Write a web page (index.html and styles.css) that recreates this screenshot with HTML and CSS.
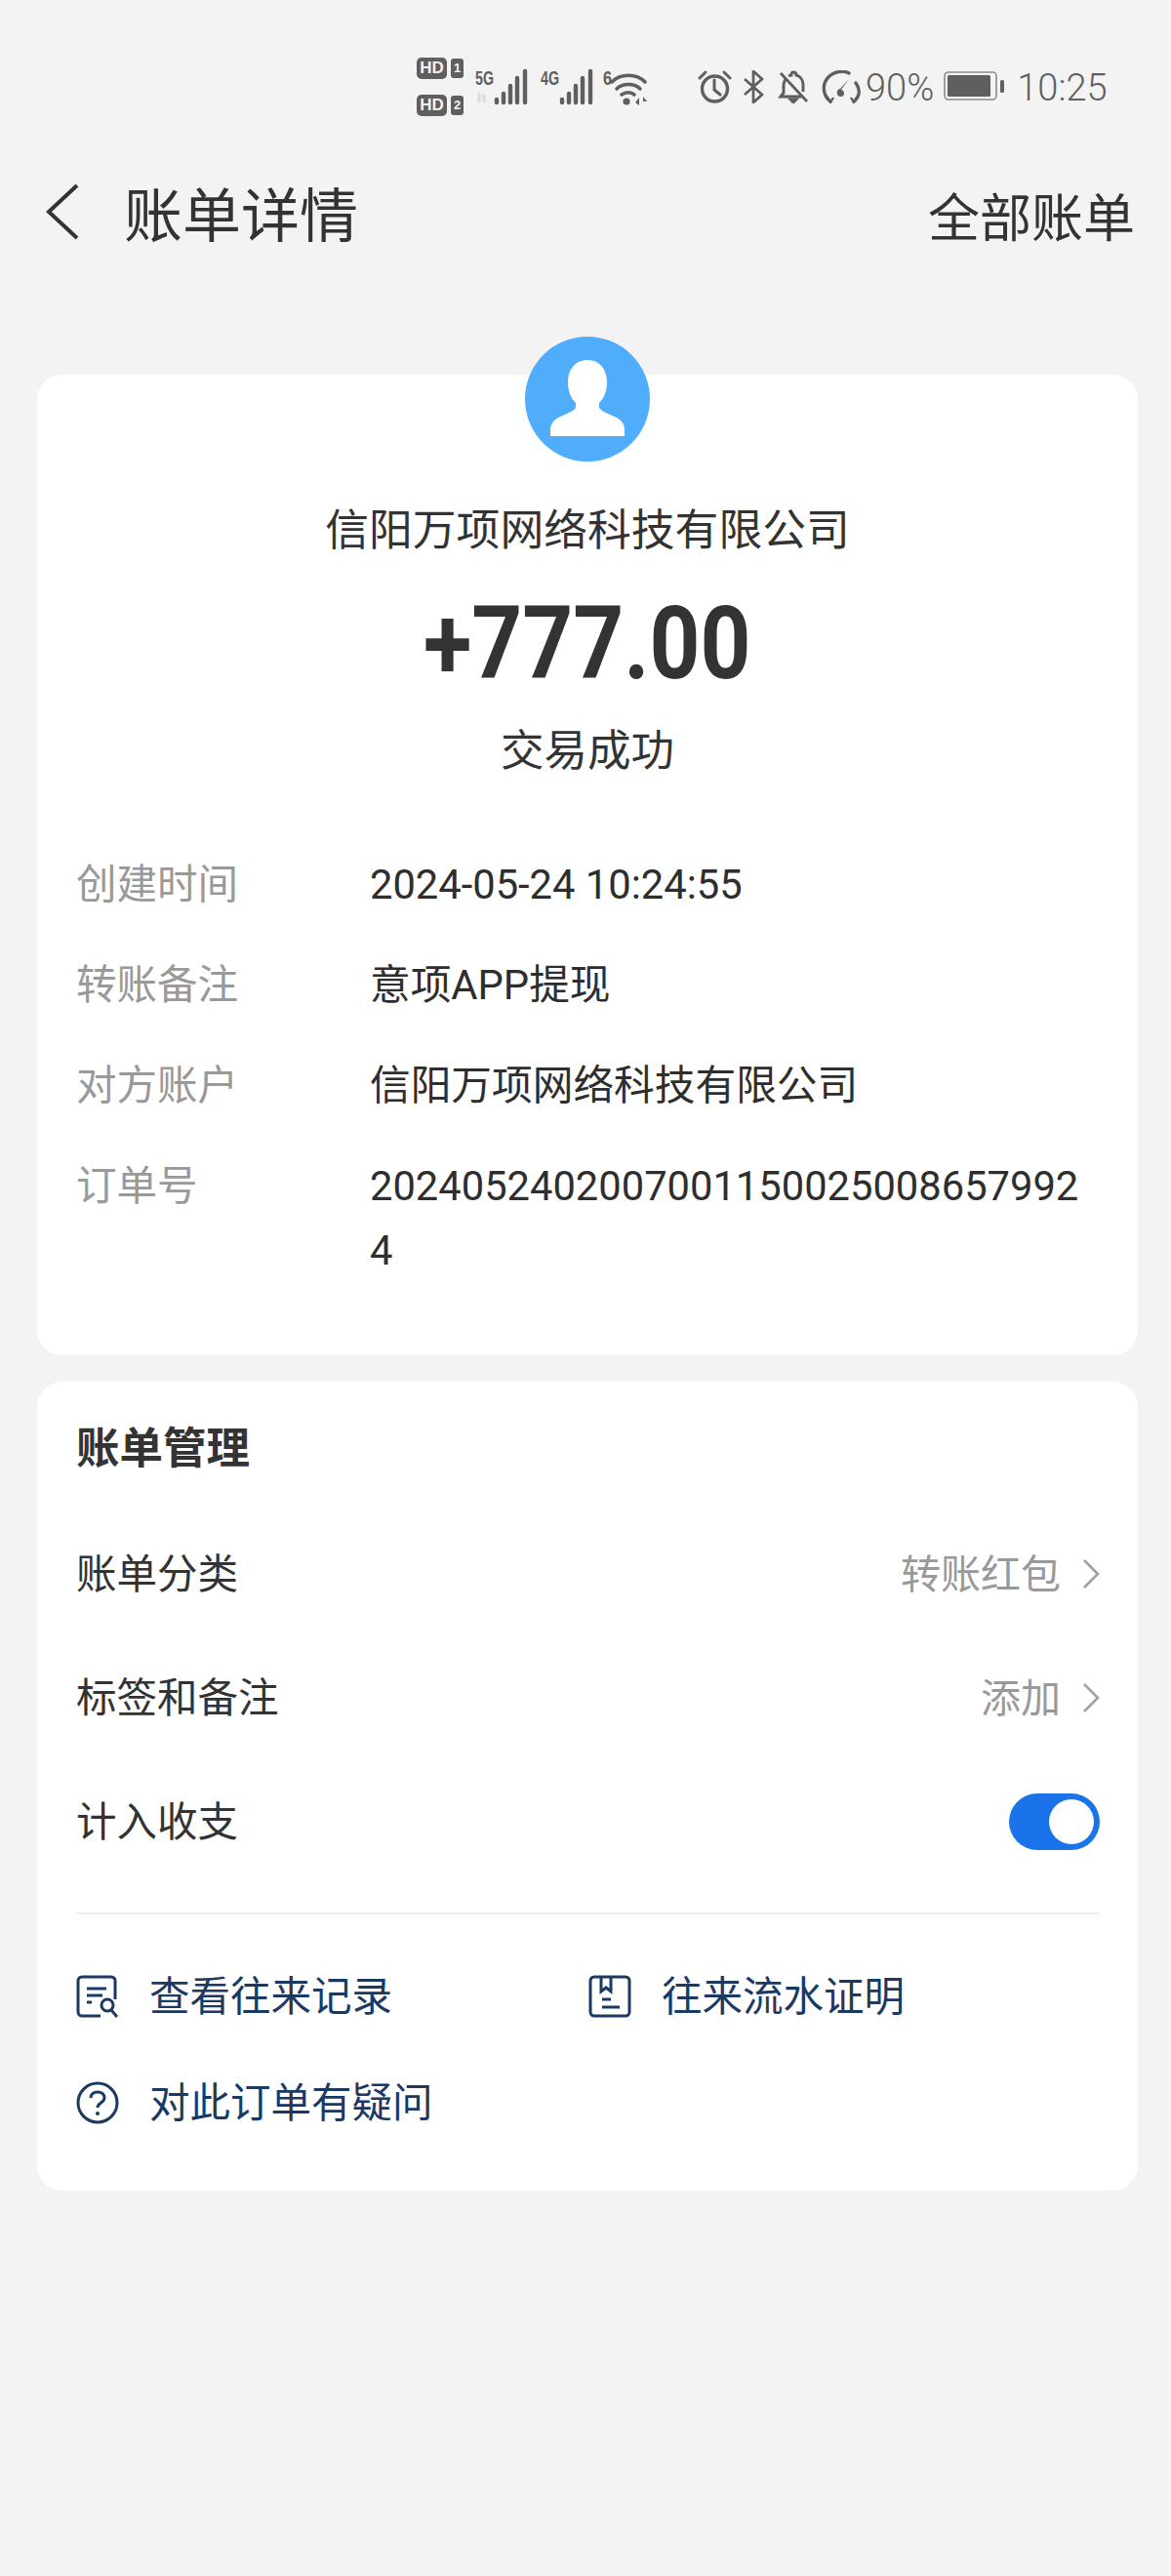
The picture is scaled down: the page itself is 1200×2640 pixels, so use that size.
FILE: index.html
```html
<!DOCTYPE html>
<html lang="zh-CN">
<head>
<meta charset="utf-8">
<title>账单详情</title>
<link rel="stylesheet" href="styles.css">
</head>
<body>
<div class="status">
  <div class="hd-group">
    <div class="hd-row"><span class="hd">HD</span><span class="sim">1</span></div>
    <div class="hd-row"><span class="hd">HD</span><span class="sim">2</span></div>
  </div>
  <svg class="ic-net" width="56" height="44" viewBox="0 -8 56 44">
    <text x="0" y="15" class="net-t" textLength="19" lengthAdjust="spacingAndGlyphs">5G</text>
    <path d="M4 23v10M9 25v8" stroke="#dcdcdc" stroke-width="3" fill="none"/>
    <path d="M22 30v3M29 24v9M36 16v17M43 8v25M51 1v32" stroke="#5f5f5f" stroke-width="4.400" stroke-linecap="round" fill="none"/>
  </svg>
  <svg class="ic-net2" width="56" height="44" viewBox="0 -8 56 44">
    <text x="0" y="15" class="net-t" textLength="19" lengthAdjust="spacingAndGlyphs">4G</text>
    <path d="M22 30v3M29 24v9M36 16v17M43 8v25M51 1v32" stroke="#5f5f5f" stroke-width="4.400" stroke-linecap="round" fill="none"/>
  </svg>
  <svg class="ic-wifi" width="46" height="44" viewBox="0 -8 46 44">
    <text x="0" y="15" class="net-t" textLength="9" lengthAdjust="spacingAndGlyphs">6</text>
    <path d="M9 12C18 3 34 3 43 12M14 19C20 13 32 13 38 19M19 25C23 22 29 22 32 25" stroke="#5f5f5f" stroke-width="3.600" fill="none" stroke-linecap="round"/>
    <circle cx="24" cy="32" r="3.600" fill="#5f5f5f"/>
    <path d="M33 33l4-5v8zM41 27l4 5h-4z" fill="#5f5f5f"/>
  </svg>
  <svg class="ic-alarm" width="35" height="34" viewBox="0 0 35 34">
    <circle cx="17.500" cy="19" r="13" stroke="#5f5f5f" stroke-width="3.400" fill="none"/>
    <path d="M17 10v10l6 5M2 8l6-6M33 8l-6-6" stroke="#5f5f5f" stroke-width="3" fill="none" stroke-linecap="round"/>
  </svg>
  <svg class="ic-bt" width="22" height="34" viewBox="0 0 22 34">
    <path d="M2 9l18 16-9 8V1l9 8L2 25" stroke="#5f5f5f" stroke-width="2.800" fill="none" stroke-linejoin="round"/>
  </svg>
  <svg class="ic-bell" width="32" height="34" viewBox="0 0 32 34">
    <path d="M8 9c-1 2-2 4-2 6v8l-3 4h21M26 22v-7c0-5-3-9-7-10 0-2-1-3-3-3s-2 1-2 3c-1 0-2 .500-3 1" stroke="#5f5f5f" stroke-width="3" fill="none"/>
    <path d="M13 30h6l-3 3zM3 3l27 29" stroke="#5f5f5f" stroke-width="2.800" fill="#5f5f5f"/>
  </svg>
  <svg class="ic-speed" width="42" height="34" viewBox="0 0 42 34">
    <path d="M10 32C2 26 1 14 8 7 14 1 23 0 29 3M36 13c5 7 4 14-2 19" stroke="#5f5f5f" stroke-width="3.400" fill="none" stroke-linecap="round"/>
    <path d="M29 9L21 20a3.500 3.500 0 1 1-4 4 3.500 3.500 0 0 1 3-5z" fill="#5f5f5f"/>
    <path d="M6 26l4 7 3-5M31 28l3 5 4-7" stroke="#5f5f5f" stroke-width="2.400" fill="none"/>
  </svg>
  <span class="pct">90%</span>
  <svg class="ic-batt" width="63" height="30" viewBox="0 0 63 30">
    <rect x="1" y="1" width="53" height="28" rx="4" fill="none" stroke="#8a8a8a" stroke-width="1.600"/>
    <rect x="4" y="4" width="44" height="22" rx="1.500" fill="#5f5f5f"/>
    <rect x="58" y="9" width="4" height="13" rx="1.500" fill="#5f5f5f"/>
  </svg>
  <span class="clock">10:25</span>
</div>

<header class="topbar">
  <div class="top-left">
    <svg class="back" width="36" height="58" viewBox="0 0 36 58">
      <path d="M33 2L4 29l29 27" stroke="#333" stroke-width="4" fill="none"/>
    </svg>
    <h1 class="top-title">账单详情</h1>
  </div>
  <span class="top-link">全部账单</span>
</header>

<main class="cards">
  <section class="card card-main">
    <div class="avatar">
      <svg width="76" height="78" viewBox="0 0 76 78">
        <path d="M38 0c-13 0-20 10-20 23 0 9 3 16 8 21v4c0 4-10 7-18 11C3 62 0 66 0 71v7h76v-7c0-5-3-9-8-12-8-4-18-7-18-11v-4c5-5 8-12 8-21C58 10 51 0 38 0z" fill="#fff"/>
      </svg>
    </div>
    <div class="company">信阳万项网络科技有限公司</div>
    <div class="amount">+777.00</div>
    <div class="state">交易成功</div>
    <dl class="details">
      <div class="d-row"><dt>创建时间</dt><dd>2024-05-24 10:24:55</dd></div>
      <div class="d-row"><dt>转账备注</dt><dd>意项APP提现</dd></div>
      <div class="d-row"><dt>对方账户</dt><dd>信阳万项网络科技有限公司</dd></div>
      <div class="d-row"><dt>订单号</dt><dd>20240524020070011500250086579924</dd></div>
    </dl>
  </section>

  <section class="card card-manage">
    <h2 class="manage-title">账单管理</h2>
    <div class="m-row">
      <span class="m-text">账单分类</span>
      <span class="m-val"><span class="m-text">转账红包</span><svg class="chev" width="18" height="30" viewBox="0 0 18 30"><path d="M2 1l14 14L2 29" stroke="#a0a0a0" stroke-width="2.600" fill="none"/></svg></span>
    </div>
    <div class="m-row">
      <span class="m-text">标签和备注</span>
      <span class="m-val"><span class="m-text">添加</span><svg class="chev" width="18" height="30" viewBox="0 0 18 30"><path d="M2 1l14 14L2 29" stroke="#a0a0a0" stroke-width="2.600" fill="none"/></svg></span>
    </div>
    <div class="m-row">
      <span class="m-text">计入收支</span>
      <span class="toggle"><span class="knob"></span></span>
    </div>
    <div class="divider"></div>
    <div class="links">
      <div class="link">
        <svg width="44" height="44" viewBox="0 0 44 44">
          <path d="M25 42H6a4 4 0 0 1-4-4V6a4 4 0 0 1 4-4h30a4 4 0 0 1 4 4v19" stroke="#1b3a63" stroke-width="3" fill="none"/>
          <path d="M11 14h20M11 21h16M11 28h5" stroke="#1b3a63" stroke-width="3" fill="none"/>
          <circle cx="32" cy="31" r="6" stroke="#1b3a63" stroke-width="3" fill="none"/>
          <path d="M36 36l6 7" stroke="#1b3a63" stroke-width="3" fill="none"/>
        </svg>
        <span class="m-text">查看往来记录</span>
      </div>
      <div class="link">
        <svg width="44" height="44" viewBox="0 0 44 44">
          <rect x="2" y="2" width="40" height="40" rx="4" stroke="#1b3a63" stroke-width="3" fill="none"/>
          <path d="M13 3v14l5-4 5 4V3M14 25h9M14 33h18" stroke="#1b3a63" stroke-width="3" fill="none"/>
        </svg>
        <span class="m-text">往来流水证明</span>
      </div>
      <div class="link">
        <svg width="44" height="44" viewBox="0 0 44 44">
          <circle cx="22" cy="22" r="20" stroke="#1b3a63" stroke-width="3" fill="none"/>
          <path d="M15 17c0-4 3-6 7-6s7 2 7 6c0 5-7 5-7 10" stroke="#1b3a63" stroke-width="3" fill="none"/>
          <circle cx="22" cy="33" r="2" fill="#1b3a63"/>
        </svg>
        <span class="m-text">对此订单有疑问</span>
      </div>
    </div>
  </section>
</main>
</body>
</html>
```

FILE: styles.css
```css
* { box-sizing: border-box; }
html, body { margin: 0; padding: 0; }
body {
  width: 1200px;
  height: 2640px;
  overflow: hidden;
  background: #f3f3f3;
  color: #333;
  font-family: "Noto Sans CJK SC", "Noto Sans", Roboto, sans-serif;
}

/* status bar */
.status {
  height: 130px;
  padding: 58px 0 0 427px;
  display: flex;
  align-items: flex-start;
  color: #5f5f5f;
  font-family: Roboto, sans-serif;
}
.hd-group { display: flex; flex-direction: column; gap: 16px; width: 60px; flex: none; margin-top: 1px; }
.hd-row { display: flex; gap: 4px; align-items: center; }
.hd {
  width: 31px; height: 22px; border-radius: 5px;
  background: #5f5f5f; color: #f3f3f3;
  font: 700 17px/22px "Liberation Sans", sans-serif;
  text-align: center;
}
.sim {
  width: 13px; height: 20px; border-radius: 3px;
  background: #5f5f5f; color: #f3f3f3;
  font: 700 13px/20px "Liberation Sans", sans-serif;
  text-align: center;
}
.net-t { font: 700 21px "Liberation Sans", sans-serif; fill: #5f5f5f; }
svg { display: block; flex: none; }
.ic-net { margin-top: 6px; }
.ic-net2 { margin: 6px 0 0 11px; }
.ic-wifi { margin: 6px 0 0 8px; }
.ic-alarm { margin: 14px 0 0 51px; }
.ic-bt { margin: 14px 0 0 11px; }
.ic-bell { margin: 14px 0 0 14px; }
.ic-speed { margin: 14px 0 0 12px; }
.pct { margin: 12px 0 0 4px; font-size: 38px; line-height: 40px; font-weight: 300; flex: none; }
.ic-batt { margin: 15px 0 0 10px; }
.clock { margin: 12px 0 0 12px; font-size: 38px; line-height: 40px; font-weight: 300; flex: none; }

/* header */
.topbar {
  height: 254px;
  padding: 57px 37px 0 46px;
  display: flex;
  justify-content: space-between;
  align-items: flex-start;
}
.top-left { display: flex; align-items: center; gap: 45px; }
.top-title { margin: 0; font-size: 60px; font-weight: 400; line-height: 60px; }
.top-link { font-size: 53px; font-weight: 400; line-height: 60px; margin-top: 3px; }

/* cards */
.cards { padding: 0 34px 0 38px; display: flex; flex-direction: column; gap: 27px; }
.card { background: #fff; border-radius: 26px; }
.card-main { height: 1005px; padding: 0 40px; display: flex; flex-direction: column; align-items: center; }
.avatar {
  width: 128px; height: 128px; border-radius: 50%;
  margin-top: -39px;
  background: #4fadfb;
  display: flex; justify-content: center; padding-top: 24px;
}
.company { margin-top: 37px; font-size: 44.800px; line-height: 60px; }
.amount {
  margin-top: 35px;
  font-family: Roboto, sans-serif; font-size: 103px; font-weight: 700; line-height: 110px;
  transform: scaleX(0.88);
}
.state { margin-top: 21px; font-size: 44.500px; line-height: 60px; }
.details { margin: 74px 0 0; width: 100%; display: flex; flex-direction: column; gap: 33px; }
.d-row { display: flex; align-items: baseline; font-size: 41.500px; line-height: 66px; }
.d-row dt { width: 301px; color: #999; flex: none; }
.d-row dd { margin: 0; width: 735px; font-size: 41.700px; word-break: break-all; font-family: Roboto, "Noto Sans CJK SC", sans-serif; color: #2e2e2e; }

.card-manage { height: 829px; padding: 35px 39px 0 40px; }
.manage-title { margin: 0 0 38px; font-size: 44.500px; line-height: 60px; font-weight: 700; }
.m-row {
  height: 127px;
  display: flex; justify-content: space-between; align-items: center;
  font-size: 41.500px;
}
.m-text { padding-bottom: 6px; }
.m-val { display: flex; align-items: center; gap: 22px; color: #999; font-size: 41px; }
.toggle { width: 93px; height: 58px; border-radius: 29px; background: #1a73e8; display: flex; align-items: center; justify-content: flex-end; padding-right: 6px; }
.knob { width: 46px; height: 46px; border-radius: 50%; background: #fff; }
.divider { margin-top: 30px; height: 2px; background: #eeeeee; }
.links { margin-top: 52px; display: grid; grid-template-columns: 525px 1fr; row-gap: 45px; }
.link { height: 64px; display: flex; align-items: center; gap: 31px; font-size: 41.500px; color: #1b3a63; }
```
